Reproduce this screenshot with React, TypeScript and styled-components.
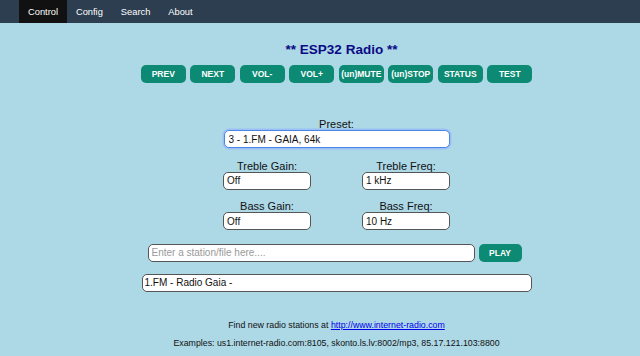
import React from "react";
import styled, { createGlobalStyle } from "styled-components";

const GlobalStyle = createGlobalStyle`
  html, body {
    margin: 0;
    padding: 0;
    background: #add8e6;
    font-family: "Liberation Sans", Arial, sans-serif;
  }
`;

const NavBar = styled.nav`
  display: flex;
  height: 23px;
  padding-left: 19px;
  background: #2c3e50;
`;

const NavItem = styled.a<{ $active?: boolean }>`
  display: flex;
  align-items: center;
  padding: 0 9px;
  font-size: 9.3px;
  color: #fff;
  text-decoration: none;
  background: ${({ $active }) => ($active ? "#111" : "transparent")};
`;

const Main = styled.main`
  display: flex;
  flex-direction: column;
  align-items: center;
  padding-left: 33px;
  text-align: center;
`;

const Title = styled.h1`
  margin: 18px 0 0 10px;
  font-size: 13.5px;
  line-height: 17px;
  color: #0a0a85;
`;

const ButtonRow = styled.div`
  display: flex;
  gap: 4.5px;
  margin-top: 7px;
`;

const Button = styled.button<{ $width?: number }>`
  width: ${({ $width }) => $width ?? 45}px;
  height: 18px;
  padding: 0;
  border: none;
  border-radius: 5px;
  background: #0d8a73;
  color: #fff;
  font-family: "Liberation Sans", Arial, sans-serif;
  font-weight: bold;
  font-size: 8.5px;
  white-space: nowrap;
`;

const Label = styled.div`
  font-size: 11px;
  line-height: 11px;
  color: #111;
`;

const Field = styled.div<{ $top: number }>`
  display: flex;
  flex-direction: column;
  align-items: center;
  margin-top: ${({ $top }) => $top}px;
`;

const Select = styled.select`
  appearance: none;
  box-sizing: border-box;
  width: 226px;
  height: 18px;
  padding: 0 4px;
  border: 1.5px solid #4a86e8;
  border-radius: 5px;
  box-shadow: 0 0 0 1.5px #9cc0f5;
  background: #fff;
  font-family: "Liberation Sans", Arial, sans-serif;
  font-size: 10px;
  color: #111;
`;

const Grid = styled.div`
  display: grid;
  grid-template-columns: 88px 88px;
  column-gap: 51px;
  row-gap: 11.5px;
  margin-top: 12.5px;
`;

const Input = styled.input<{ $width?: number }>`
  box-sizing: border-box;
  width: ${({ $width }) => $width ?? 88}px;
  height: 18px;
  padding: 0 3px;
  border: 1px solid #555;
  border-radius: 5px;
  background: #fff;
  font-family: "Liberation Sans", Arial, sans-serif;
  font-size: 10px;
  color: #111;
  &::placeholder {
    color: #999;
  }
`;

const StationRow = styled.div`
  display: flex;
  align-items: center;
  gap: 4px;
  margin-top: 13.5px;
  margin-left: -4px;
`;

const ResultBox = styled(Input)`
  margin-top: 12px;
  padding: 0 2px;
`;

const Footer = styled.div`
  margin-top: 24px;
  font-size: 8.8px;
  line-height: 18px;
  color: #111;
  a {
    color: #0000ee;
  }
`;

const buttons = ["PREV", "NEXT", "VOL-", "VOL+", "(un)MUTE", "(un)STOP", "STATUS", "TEST"];

export default function App() {
  return (
    <>
      <GlobalStyle />
      <NavBar>
        <NavItem $active>Control</NavItem>
        <NavItem>Config</NavItem>
        <NavItem>Search</NavItem>
        <NavItem>About</NavItem>
      </NavBar>
      <Main>
        <Title>** ESP32 Radio **</Title>
        <ButtonRow>
          {buttons.map((b) => (
            <Button key={b}>{b}</Button>
          ))}
        </ButtonRow>
        <Field $top={36}>
          <Label>Preset:</Label>
          <Select defaultValue="3">
            <option value="3">3 - 1.FM - GAIA, 64k</option>
          </Select>
        </Field>
        <Grid>
          <Field $top={0}>
            <Label>Treble Gain:</Label>
            <Input defaultValue="Off" />
          </Field>
          <Field $top={0}>
            <Label>Treble Freq:</Label>
            <Input defaultValue="1 kHz" />
          </Field>
          <Field $top={0}>
            <Label>Bass Gain:</Label>
            <Input defaultValue="Off" />
          </Field>
          <Field $top={0}>
            <Label>Bass Freq:</Label>
            <Input defaultValue="10 Hz" />
          </Field>
        </Grid>
        <StationRow>
          <Input $width={327} placeholder="Enter a station/file here...." />
          <Button $width={43}>PLAY</Button>
        </StationRow>
        <ResultBox $width={390} defaultValue="1.FM - Radio Gaia -" />
        <Footer>
          Find new radio stations at <a href="#">http://www.internet-radio.com</a>
          <br />
          Examples: us1.internet-radio.com:8105, skonto.ls.lv:8002/mp3, 85.17.121.103:8800
        </Footer>
      </Main>
    </>
  );
}
